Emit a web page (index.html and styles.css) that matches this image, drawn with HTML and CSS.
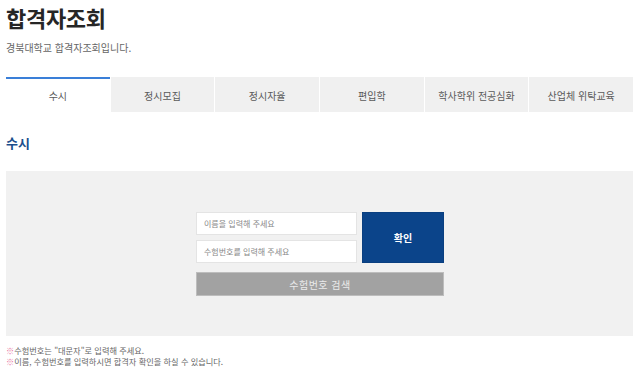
FILE: index.html
```html
<!DOCTYPE html>
<html lang="ko">
<head>
<meta charset="utf-8">
<title>합격자조회</title>
<link rel="stylesheet" href="styles.css">
</head>
<body>
<div class="page">
  <h1 class="title">합격자조회</h1>
  <p class="subtitle">경북대학교 합격자조회입니다.</p>
  <ul class="tabs">
    <li class="tab active">수시</li>
    <li class="tab">정시모집</li>
    <li class="tab">정시자율</li>
    <li class="tab">편입학</li>
    <li class="tab">학사학위 전공심화</li>
    <li class="tab">산업체 위탁교육</li>
  </ul>
  <h2 class="section-title">수시</h2>
  <div class="search-box">
    <div class="form">
      <div class="row">
        <div class="inputs">
          <input class="field" type="text" placeholder="이름을 입력해 주세요">
          <input class="field" type="text" placeholder="수험번호를 입력해 주세요">
        </div>
        <button class="confirm" type="button">확인</button>
      </div>
      <button class="find" type="button">수험번호 검색</button>
    </div>
  </div>
  <div class="notes">
    <p class="note"><span class="mark">※</span>수험번호는 "대문자"로 입력해 주세요.</p>
    <p class="note"><span class="mark">※</span>이름, 수험번호를 입력하시면 합격자 확인을 하실 수 있습니다.</p>
  </div>
</div>
</body>
</html>
```

FILE: styles.css
```css
* { box-sizing: border-box; }
html, body { margin: 0; padding: 0; background: #fff; }
body {
  font-family: "Noto Sans CJK KR", "Noto Sans", sans-serif;
  color: #333;
}
.page { padding: 0 7px 0 6px; }
.title {
  margin: 0;
  padding-top: 2px;
  font-size: 22px;
  line-height: 30px;
  font-weight: 700;
  color: #262626;
  letter-spacing: -0.3px;
}
.subtitle {
  margin: 9px 0 0;
  font-size: 10px;
  line-height: 14px;
  color: #666;
}
.tabs {
  list-style: none;
  margin: 22px 0 0;
  padding: 0;
  display: flex;
  gap: 1px;
}
.tab {
  flex: 1;
  height: 35px;
  background: #f0f0f0;
  border-top: 1px solid #f0f0f0;
  display: flex;
  align-items: center;
  justify-content: center;
  font-size: 10px;
  color: #5a5a5a;
}
.tab.active {
  background: #fff;
  border-top: 2px solid #3a7fd8;
}
.section-title {
  margin: 22px 0 0;
  font-size: 13px;
  line-height: 18px;
  font-weight: 700;
  color: #1b4e8c;
}
.search-box {
  margin-top: 19px;
  height: 165px;
  background: #f1f1f1;
  display: flex;
  justify-content: center;
  padding-top: 41px;
}
.form { width: 248px; margin-left: 1px; }
.row { display: flex; gap: 5px; }
.inputs { display: flex; flex-direction: column; gap: 5px; width: 161px; }
.field {
  height: 23px;
  border: 1px solid #e4e4e4;
  background: #fff;
  padding: 0 7px;
  font-family: inherit;
  font-size: 8px;
  color: #333;
  outline: none;
}
.field::placeholder { color: #888; }
.confirm {
  flex: 1;
  height: 51px;
  border: 1px solid #0a3f80;
  background: #0b448a;
  color: #fff;
  font-family: inherit;
  font-size: 10px;
  font-weight: 700;
  padding: 0;
}
.find {
  display: block;
  width: 100%;
  margin-top: 9px;
  height: 24px;
  border: 1px solid #bdbdbd;
  background: #a2a2a2;
  color: #eaeaea;
  font-family: inherit;
  font-size: 10px;
  padding: 0;
  letter-spacing: 0.5px;
}
.notes { margin-top: 9px; }
.note {
  margin: 0;
  font-size: 8.2px;
  line-height: 11px;
  color: #666;
}
.mark { color: #e97aa6; }
```
